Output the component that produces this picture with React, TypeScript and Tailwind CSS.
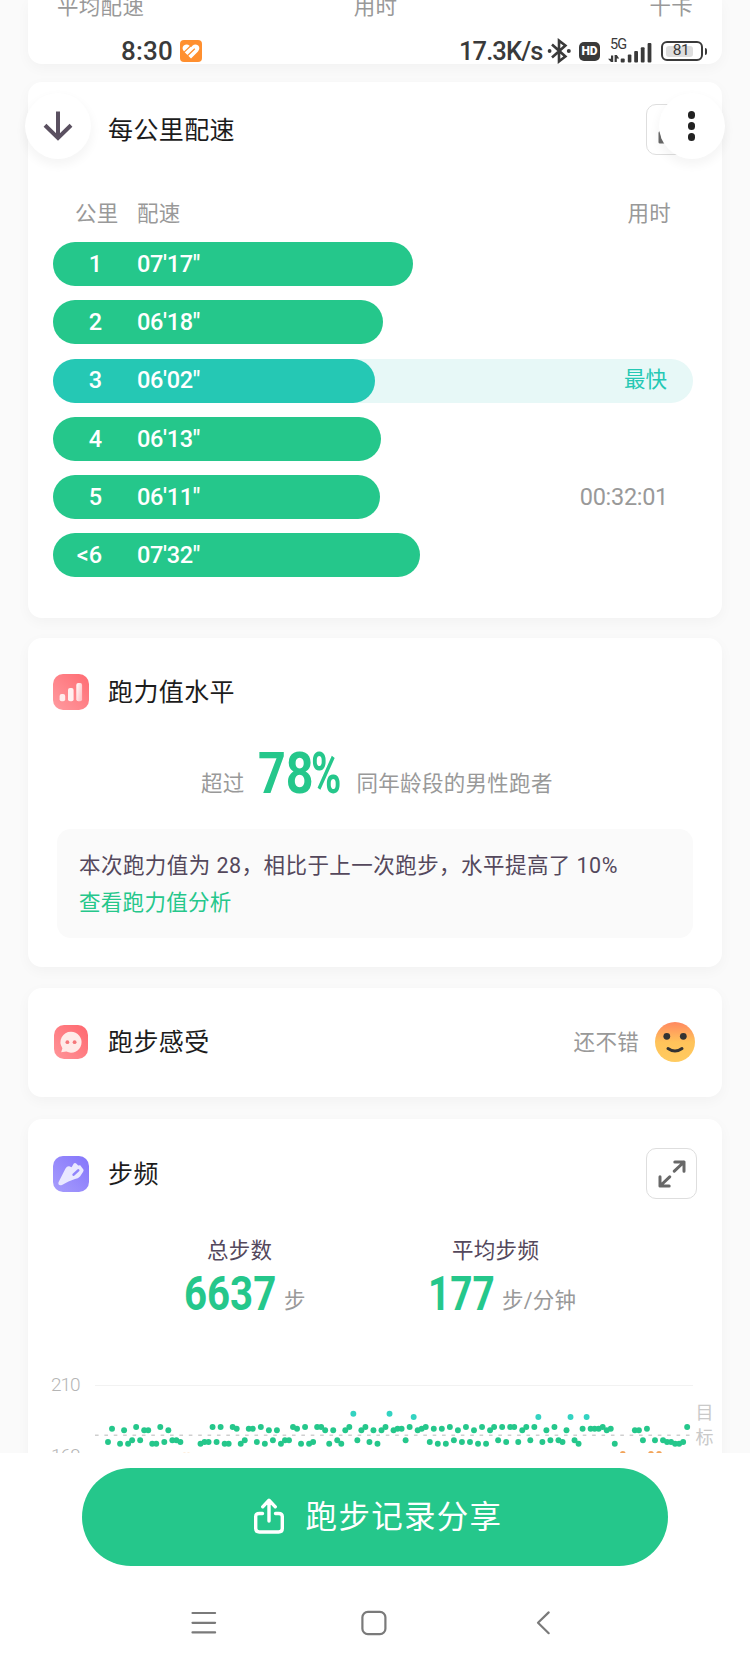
import type { ReactNode } from 'react'

const splits = [
  { km: '1', pace: `07'17"`, width: 'w-[360px]' },
  { km: '2', pace: `06'18"`, width: 'w-[330px]' },
  { km: '3', pace: `06'02"`, width: 'w-[322px]', fastest: true },
  { km: '4', pace: `06'13"`, width: 'w-[328px]' },
  { km: '5', pace: `06'11"`, width: 'w-[327px]', time: '00:32:01' },
  { km: '<6', pace: `07'32"`, width: 'w-[367px]' },
]

// One character per sample, each letter is a cadence level, a dot is a gap
const cadence =
  'yb.zczxaxcczzaycxxypp..zyyayazzabzxbbyazcxczxxabzazyaaczcxzcatxcayc' +
  'zcatcbbxaucbaybzbzaxcyayczazcaxayaaycaxauycxaxycuxzbubbbacbz.o..ccxboxoxyyzzya'

const levels: Record<string, { y: number; color: string }> = {
  t: { y: 27.7, color: '#33d3c1' },
  u: { y: 31, color: '#33d3c1' },
  a: { y: 41, color: '#25c78b' },
  b: { y: 42.7, color: '#25c78b' },
  c: { y: 44.3, color: '#25c78b' },
  x: { y: 54.3, color: '#25c78b' },
  y: { y: 56, color: '#25c78b' },
  z: { y: 57.7, color: '#25c78b' },
  o: { y: 68, color: '#f2a45a' },
  p: { y: 69.5, color: '#fbdcba' },
}

const Card = ({ className, children }: { className: string; children?: ReactNode }) => (
  <section className={`mx-7 shrink-0 bg-white shadow-[0_4px_14px_rgba(0,0,0,0.035)] ${className}`}>{children}</section>
)

const Title = ({ children }: { children: ReactNode }) => (
  <h2 className="pt-[2px] text-[25px] leading-9 tracking-[0.4px] text-[#1c1c1c]">{children}</h2>
)

const ExpandButton = () => (
  <button className="flex size-[51px] items-center justify-center rounded-[10px] border border-[#dedede]">
    <svg width="28" height="28" viewBox="0 0 28 28" fill="none" stroke="#686868" strokeWidth="3" strokeLinecap="round" strokeLinejoin="round">
      <path d="M16.3 11.2 26 2M16.8 2H26v9.2M11.7 16.8 2 26M2 16.8V26h9.2" />
    </svg>
  </button>
)

const LevelIcon = () => (
  <svg width="36" height="36" viewBox="0 0 36 36">
    <defs>
      <linearGradient id="level-bg" x1="1" y1="0" x2="0" y2="1">
        <stop stopColor="#ff6b72" />
        <stop offset="1" stopColor="#ff9ba0" />
      </linearGradient>
      <linearGradient id="level-bar" x1="0" y1="0" x2="1" y2="0.6">
        <stop stopColor="#fff" />
        <stop offset="1" stopColor="#ffc3c6" />
      </linearGradient>
    </defs>
    <rect width="36" height="36" rx="10" fill="url(#level-bg)" />
    <rect x="6.6" y="20" width="5.6" height="7.2" rx="2" fill="#ffecec" />
    <rect x="15" y="14" width="5.6" height="13.2" rx="2" fill="#fff0f0" />
    <rect x="23.3" y="9" width="5.8" height="18.2" rx="2" fill="url(#level-bar)" />
  </svg>
)

const FeelingIcon = () => (
  <svg width="36" height="36" viewBox="0 0 36 36">
    <defs>
      <linearGradient id="feel-bg" x1="1" y1="0" x2="0" y2="1">
        <stop stopColor="#ff676e" />
        <stop offset="1" stopColor="#ff9599" />
      </linearGradient>
    </defs>
    <rect x="1" y="1" width="34" height="34" rx="10" fill="url(#feel-bg)" />
    <path d="M18 7.7A10.5 10.5 0 1 1 13.4 27.6L8.2 28.2 9.4 24.2A10.5 10.5 0 0 1 18 7.7Z" fill="#ffebe8" />
    <circle cx="14.4" cy="18.2" r="1.9" fill="#f5787b" />
    <circle cx="21.6" cy="18.2" r="1.9" fill="#f5787b" />
  </svg>
)

const ShoeIcon = () => (
  <svg width="36" height="36" viewBox="0 0 36 36">
    <defs>
      <linearGradient id="shoe-bg" x1="1" y1="0" x2="0" y2="1">
        <stop stopColor="#8475fb" />
        <stop offset="1" stopColor="#a79dfc" />
      </linearGradient>
    </defs>
    <rect width="36" height="36" rx="10" fill="url(#shoe-bg)" />
    <path
      d="M5.5 26.2 12.5 12.5Q14 9.8 16.2 10.2L18.6 11.3 20.8 7.6Q22 6.6 23.2 7.6L25.2 9.4 27.2 9.2 30.4 13.4Q31 14.8 30 16L27 20.4Q25 22.4 22 23L15.5 25.5 9 29Q4.6 30 5.5 26.2Z"
      fill="#e9e8ff"
    />
    <path d="m20.6 18.6 4.6-4.2" stroke="#9084fb" strokeWidth="2.6" strokeLinecap="round" />
  </svg>
)

const Smiley = () => (
  <svg width="40" height="40" viewBox="0 0 40 40">
    <defs>
      <linearGradient id="smile" x1="0" y1="0" x2="0" y2="1">
        <stop stopColor="#ff8860" />
        <stop offset="0.5" stopColor="#ffc35a" />
        <stop offset="1" stopColor="#ffcb60" />
      </linearGradient>
    </defs>
    <circle cx="20" cy="20" r="20" fill="url(#smile)" />
    <circle cx="11.8" cy="14.3" r="3.4" fill="#333" />
    <circle cx="28.3" cy="14.3" r="3.4" fill="#333" />
    <path d="M13 26.5Q20 31.5 27 26.5" fill="none" stroke="#333" strokeWidth="3" strokeLinecap="round" />
  </svg>
)

const CadenceChart = () => (
  <svg width="694" height="80" viewBox="28 0 694 80" overflow="visible">
    <path d="M95 -.5H693" stroke="#f2f2f2" strokeWidth="1" />
    <path d="M95 49.3H690" stroke="#cfcfcf" strokeWidth="1.6" strokeDasharray="3.6 5.78" />
    {cadence.split('').map((c, i) => {
      const level = levels[c]
      return level && <circle key={i} cx={108 + i * 4.022} cy={level.y} r="2.95" fill={level.color} />
    })}
  </svg>
)

const StatusBar = () => (
  <header className="absolute inset-x-0 top-[36px] flex h-[30px] items-center text-[#3a3a3a]">
    <span className="ml-[121px] w-[54px] text-[26px] font-medium tracking-[0.2px]">8:30</span>
    <svg className="ml-[4.5px]" width="22" height="22" viewBox="0 0 22 22">
      <rect width="22" height="22" rx="4" fill="#ff8f2f" />
      <path d="M11 18.6 4 11.4Q1.2 8 3.8 5.6 6.8 3.4 9.6 5.8L11 7.2 12.4 5.8Q15.2 3.4 18.2 5.6 20.6 8 18 11.4Z" fill="#fff" />
      <path d="M3.6 12.6 11.6 5M7.2 16 14.8 8.8" stroke="#ff8f2f" strokeWidth="1.3" />
    </svg>
    <span className="ml-auto w-[85px] text-[25.5px] font-medium tracking-[-0.9px] whitespace-nowrap">17.3K/s</span>
    <svg className="ml-[2px]" width="26" height="26" viewBox="0 0 26 26" fill="none" stroke="#3a3a3a" strokeWidth="2.6">
      <path d="m6 6.5 13.4 12L13 23.4V2.6l6.4 4.9L6 19.5" />
      <circle cx="3.6" cy="13" r="1.9" fill="#3a3a3a" stroke="none" />
      <circle cx="22.8" cy="13" r="2" fill="#3a3a3a" stroke="none" />
    </svg>
    <span className="ml-[7px] flex h-[19px] w-[21px] items-center justify-center rounded-[5px] bg-[#3a3a3a] text-[12px] font-black text-white">HD</span>
    <div className="relative ml-[8px] h-[26px] w-[44px]">
      <span className="absolute top-0 left-[2px] text-[14.5px] leading-[13px] tracking-[-0.8px]">5G</span>
      <svg width="44" height="26" viewBox="0 0 44 26" fill="#3a3a3a">
        <path d="M3 17.5h2.2V24H3L0 20.8h3zM6.6 24V17h2.2l2.4 3.4H8.8V24z" />
        <rect x="12.7" y="20.5" width="4" height="4" rx="1" />
        <rect x="19.8" y="16.5" width="3.6" height="8" rx="1" />
        <rect x="26.2" y="13" width="3.8" height="11.5" rx="1" />
        <rect x="32.8" y="9.3" width="3.8" height="15.2" rx="1" />
        <rect x="39.6" y="5" width="3.8" height="19.5" rx="1" />
      </svg>
    </div>
    <div className="mr-[43px] ml-[9px] flex items-center gap-[2px]">
      <div className="flex h-[20px] w-[41.5px] items-center rounded-[6px] border-2 border-[#3a3a3a] p-[2.5px]">
        <div className="flex h-full w-[27px] items-center justify-center rounded-[3px] bg-[#dedede] pl-1 text-[15.5px] tracking-[-0.4px]">81</div>
      </div>
      <div className="h-[7px] w-[2.5px] rounded-r bg-[#3a3a3a]" />
    </div>
  </header>
)

export default function App() {
  return (
    <div className="relative flex h-[1666px] w-[750px] flex-col overflow-hidden bg-white font-[Roboto,'Noto_Sans_CJK_SC',sans-serif]">
      <main className="flex h-[1453px] shrink-0 flex-col overflow-hidden bg-[#fafafa]">
        {/* Tail of the summary card */}
        <Card className="h-16 rounded-b-[14px]">
          <div className="-mt-[9.5px] flex justify-between pr-[29px] pl-[29px] text-[21.5px] leading-8 tracking-[0.3px] text-[#999]">
            <span className="w-[100px]">平均配速</span>
            <span className="pr-[11px]">用时</span>
            <span className="w-[88px] text-right">千卡</span>
          </div>
        </Card>

        {/* Pace per kilometre */}
        <Card className="mt-[18px] h-[536px] rounded-[14px]">
          <div className="flex items-center justify-between pt-[22px] pr-[25px] pl-[80px]">
            <Title>每公里配速</Title>
            <ExpandButton />
          </div>
          <div className="mt-[43px] flex pr-[51px] pl-[47px] text-[21.5px] leading-8 tracking-[0.3px] text-[#999]">
            <span className="w-[62px]">公里</span>
            <span>配速</span>
            <span className="ml-auto">用时</span>
          </div>
          <ul className="mt-[12px] mr-[29px] ml-[25px] flex flex-col gap-[14.3px] text-[23.5px]">
            {splits.map((s) => (
              <li
                key={s.km}
                className={`flex h-11 items-center justify-between rounded-full ${s.fastest ? 'bg-[#e7f8f7]' : ''}`}
              >
                <div className={`flex h-11 items-center rounded-full pt-px font-medium text-white ${s.width} ${s.fastest ? 'bg-[#25c8b4]' : 'bg-[#25c78b]'}`}>
                  <span className="w-[49px] text-right">{s.km}</span>
                  <span className="ml-[35px] tracking-[-0.3px]">{s.pace}</span>
                </div>
                {s.fastest && <span className="mr-[26px] text-[21.5px] text-[#25c8b4]">最快</span>}
                {s.time && <span className="mr-[25px] pt-px tracking-[-0.3px] text-[#999]">{s.time}</span>}
              </li>
            ))}
          </ul>
        </Card>

        {/* Running level */}
        <Card className="mt-5 h-[329px] rounded-[14px]">
          <div className="flex items-center gap-[19px] pt-[35px] pl-[25px]">
            <LevelIcon />
            <Title>跑力值水平</Title>
          </div>
          <div className="mt-[33px] flex h-[60px] items-end pl-[173px] text-[21.5px] leading-[40px] tracking-[0.3px] text-[#999]">
            <span className="w-[57px]">超过</span>
            <span className="w-[53px] origin-left scale-x-[0.85] text-[57px] leading-[60px] font-bold tracking-normal text-[#25c78b]">78</span>
            <span className="w-[45.5px] origin-left scale-x-[0.72] text-[57px] leading-[60px] font-bold tracking-normal text-[#25c78b]">%</span>
            <span>同年龄段的男性跑者</span>
          </div>
          <div className="mt-[25px] mr-[29px] ml-[29px] h-[109px] rounded-[14px] bg-[#fafafa] px-[22px] pt-[19px] text-[21.5px] leading-[36.5px] tracking-[0.3px] whitespace-nowrap">
            <p className="tracking-[0.45px] text-[#54485c]">本次跑力值为 28，相比于上一次跑步，水平提高了 10%</p>
            <p className="text-[#25c78b]">查看跑力值分析</p>
          </div>
        </Card>

        {/* Feeling */}
        <Card className="mt-[21px] flex h-[109px] items-center rounded-[14px] pr-[27px] pb-px pl-[25px]">
          <FeelingIcon />
          <div className="ml-[19px]">
            <Title>跑步感受</Title>
          </div>
          <span className="mr-[16px] ml-auto pt-[2px] text-[21.5px] tracking-[0.3px] text-[#999]">还不错</span>
          <Smiley />
        </Card>

        {/* Cadence */}
        <Card className="mt-[22px] h-[400px] rounded-[14px]">
          <div className="flex items-center pt-[29px] pr-[25px] pl-[25px]">
            <ShoeIcon />
            <div className="mr-auto ml-[19px]">
              <Title>步频</Title>
            </div>
            <ExpandButton />
          </div>
          <div className="mt-[35.5px] flex">
            <div className="w-[251px] pl-[156px]">
              <p className="pl-[23px] text-[21.5px] leading-8 tracking-[0.3px] whitespace-nowrap text-[#54485c]">总步数</p>
              <div className="flex h-[54px] items-end leading-[40px]">
                <span className="w-[100px] origin-left scale-x-[0.82] text-[49px] leading-[54px] font-bold text-[#25c78b]">6637</span>
                <span className="text-[21.5px] text-[#999]">步</span>
              </div>
            </div>
            <div className="pl-[149px]">
              <p className="pl-[24px] text-[21.5px] leading-8 tracking-[0.3px] whitespace-nowrap text-[#54485c]">平均步频</p>
              <div className="flex h-[54px] items-end leading-[40px]">
                <span className="w-[74px] origin-left scale-x-[0.79] text-[49px] leading-[54px] font-bold text-[#25c78b]">177</span>
                <span className="text-[21.5px] tracking-[0.2px] text-[#999]">步/分钟</span>
              </div>
            </div>
          </div>
          <div className="relative mt-[65.5px]">
            <CadenceChart />
            <span className="absolute -top-[13px] left-[23px] text-[19px] leading-6 font-light tracking-[-1px] text-[#b5b5b5]">210</span>
            <span className="absolute top-[58px] left-[23px] text-[19px] leading-6 font-light tracking-[-1px] text-[#b5b5b5]">168</span>
            <span className="absolute top-[15px] right-[8.5px] w-[18px] text-[18px] leading-[24.5px] text-[#c9c9c9]">目标</span>
          </div>
        </Card>
      </main>

      <footer className="flex flex-col items-center pt-[15px]">
        <button className="flex h-[98px] w-[586px] items-center justify-center gap-[22px] rounded-full bg-[#25c78b] pl-[6px] text-[31.5px] tracking-[1.3px] text-white">
          <svg className="-mt-[2px]" width="30" height="36" viewBox="0 0 30 36" fill="none" stroke="#fff" strokeWidth="3.4" strokeLinecap="round" strokeLinejoin="round">
            <path d="M8.5 15.5H5.4Q1.7 15.5 1.7 18.5V30.5Q1.7 34 5.4 34H24.6Q28.3 34 28.3 30.5V18.5Q28.3 15.5 24.6 15.5H21.5M15 23V3M8.7 8.8 15 2.2 21.3 8.8" />
          </svg>
          <span className="pt-[2px]">跑步记录分享</span>
        </button>
        <nav className="mt-[43.5px] mr-[5px] flex w-[363px] items-center justify-between text-[#7a7a7a]">
          <svg width="26" height="26" viewBox="0 0 26 26" fill="none" stroke="currentColor" strokeWidth="2.2" strokeLinecap="round">
            <path d="M1.5 3h22.6M1.5 12.8h22.6M1.5 22.4h22.6" />
          </svg>
          <svg className="ml-[-5px]" width="26" height="26" viewBox="0 0 26 26" fill="none" stroke="currentColor" strokeWidth="2.2">
            <rect x="1.4" y="1.8" width="23" height="22.4" rx="5.5" />
          </svg>
          <svg width="18" height="26" viewBox="0 0 18 26" fill="none" stroke="currentColor" strokeWidth="2.2" strokeLinecap="round" strokeLinejoin="round">
            <path d="M12.7 2.4 2 12.8l10.7 10.4" />
          </svg>
        </nav>
      </footer>

      <StatusBar />

      {/* Floating round buttons */}
      <button className="absolute top-[93px] left-[25.4px] flex size-[66px] items-center justify-center rounded-full bg-white shadow-[0_5px_10px_2px_rgba(0,0,0,0.04)]">
        <svg width="30" height="30" viewBox="0 0 30 30" fill="none" stroke="#5a5060" strokeWidth="4">
          <path d="M15 .5V26M2 14.2 15 27 28 14.2" />
        </svg>
      </button>
      <button className="absolute top-[93px] left-[658.7px] flex size-[66px] flex-col items-center justify-center gap-[3.5px] rounded-full bg-white shadow-[0_5px_10px_2px_rgba(0,0,0,0.04)]">
        <i className="size-[7.6px] rounded-full bg-[#222]" />
        <i className="size-[7.6px] rounded-full bg-[#222]" />
        <i className="size-[7.6px] rounded-full bg-[#222]" />
      </button>
    </div>
  )
}
